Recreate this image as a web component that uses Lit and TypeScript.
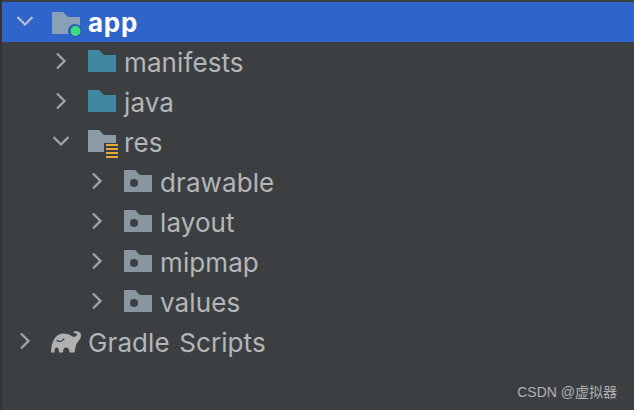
import { LitElement, html, css, svg } from "lit";
import { customElement } from "lit/decorators.js";

type Kind = "module" | "teal" | "res" | "dot" | "gradle";
interface Row { label: string; depth: number; open: boolean; kind: Kind; selected?: boolean }

const rows: Row[] = [
  { label: "app", depth: 0, open: true, kind: "module", selected: true },
  { label: "manifests", depth: 1, open: false, kind: "teal" },
  { label: "java", depth: 1, open: false, kind: "teal" },
  { label: "res", depth: 1, open: true, kind: "res" },
  { label: "drawable", depth: 2, open: false, kind: "dot" },
  { label: "layout", depth: 2, open: false, kind: "dot" },
  { label: "mipmap", depth: 2, open: false, kind: "dot" },
  { label: "values", depth: 2, open: false, kind: "dot" },
  { label: "Gradle Scripts", depth: 0, open: false, kind: "gradle" },
];

const FOLDER = "M0 0H11L16 5H28V22H0Z";

function icon(kind: Kind) {
  switch (kind) {
    case "module":
      return svg`<g transform="translate(0 2)"><path d="${FOLDER}" fill="#8a9fb8"/><circle cx="23" cy="19" r="7" fill="#2a5bb5"/><circle cx="23.500" cy="19" r="5" fill="#3ddc84"/></g>`;
    case "teal":
      return svg`<path d="${FOLDER}" fill="#3f87a3"/>`;
    case "res":
      return svg`<path d="M0 0H11L16 5H28V13H16V22H0Z" fill="#8a9ba6"/>
        <path d="M18 15H30M18 19H30M18 23H30M18 27H30" stroke="#e5a93c" stroke-width="2"/>`;
    case "dot":
      return svg`<path d="${FOLDER}" fill="#87969f"/><circle cx="10" cy="13" r="4" fill="#3c3f41"/>`;
    case "gradle":
      return svg`<g transform="translate(0 1)">
        <path d="M-1 21.500C-1 12 3 2.500 11 2.500C15 2.500 18 3.500 20.500 5.500C22.500 6.500 25.500 5 25 3C24.500 2 23 2 22 2.500L21.500 .8C25 -.5 29.500 1 29 5C28.500 9 25 11 24 14L22.500 21.500H17.500C17.500 18 16 16.500 14 16.500C12 16.500 11 18 11 21.500H7C7 18 6 16.500 4.500 16.500C3 16.500 2.500 18 2.500 21.500Z" fill="#afb1b3"/>
        <path d="M4.700 9C6.500 11 9.500 11.500 12.300 7.700" fill="none" stroke="#3c3f41" stroke-width="1.200"/>
      </g>`;
  }
}

@customElement("app-root")
export class AppRoot extends LitElement {
  static styles = css`
    :host {
      display: block;
      width: 634px;
      height: 410px;
      background: #3c3f41;
      overflow: hidden;
      position: relative;
      box-sizing: border-box;
      padding: 2px 0 0 2px;
      font-family: Inter, "Liberation Sans", sans-serif;
    }
    .edge {
      position: absolute;
      left: 0;
      top: 0;
      bottom: 0;
      width: 2px;
      background: #323232;
    }
    .row {
      height: 40px;
      display: flex;
      align-items: center;
      color: #b4b6b8;
      font-size: 26px;
      letter-spacing: 0.1px;
      word-spacing: 2px;
      box-sizing: border-box;
    }
    .row.selected {
      background: #2f65ca;
      color: #fff;
      font-weight: 700;
      letter-spacing: 0.7px;
    }
    .d0 { padding-left: 14px; }
    .d1 { padding-left: 50px; }
    .d2 { padding-left: 86px; }
    .chev {
      width: 18px;
      height: 18px;
      flex: none;
      fill: none;
      stroke: #a3a5a7;
      stroke-width: 2.2;
      margin-bottom: 2px;
    }
    .row.selected .chev { stroke: #b7c0cc; }
    .ico {
      width: 32px;
      height: 28px;
      flex: none;
      margin-left: 18px;
      margin-right: 4px;
      margin-bottom: 2px;
      overflow: visible;
    }
    .wm {
      position: absolute;
      right: 17px;
      bottom: 9px;
      font-family: "Liberation Sans", "Noto Sans CJK SC", sans-serif;
      font-size: 14px;
      color: #b0b1b2;
    }
  `;

  render() {
    return html`
      <div class="edge"></div>
      ${rows.map(
        (r) => html`
          <div class="row d${r.depth} ${r.selected ? "selected" : ""}">
            <svg class="chev" viewBox="0 0 18 18">
              ${r.open
                ? svg`<path d="M1.500 5L9 12.500L16.500 5"/>`
                : svg`<path d="M5 1.500L12.500 9L5 16.500"/>`}
            </svg>
            <svg class="ico" viewBox="0 -3 32 28">${icon(r.kind)}</svg>
            <span>${r.label}</span>
          </div>
        `
      )}
      <div class="wm">CSDN @虚拟器</div>
    `;
  }
}
